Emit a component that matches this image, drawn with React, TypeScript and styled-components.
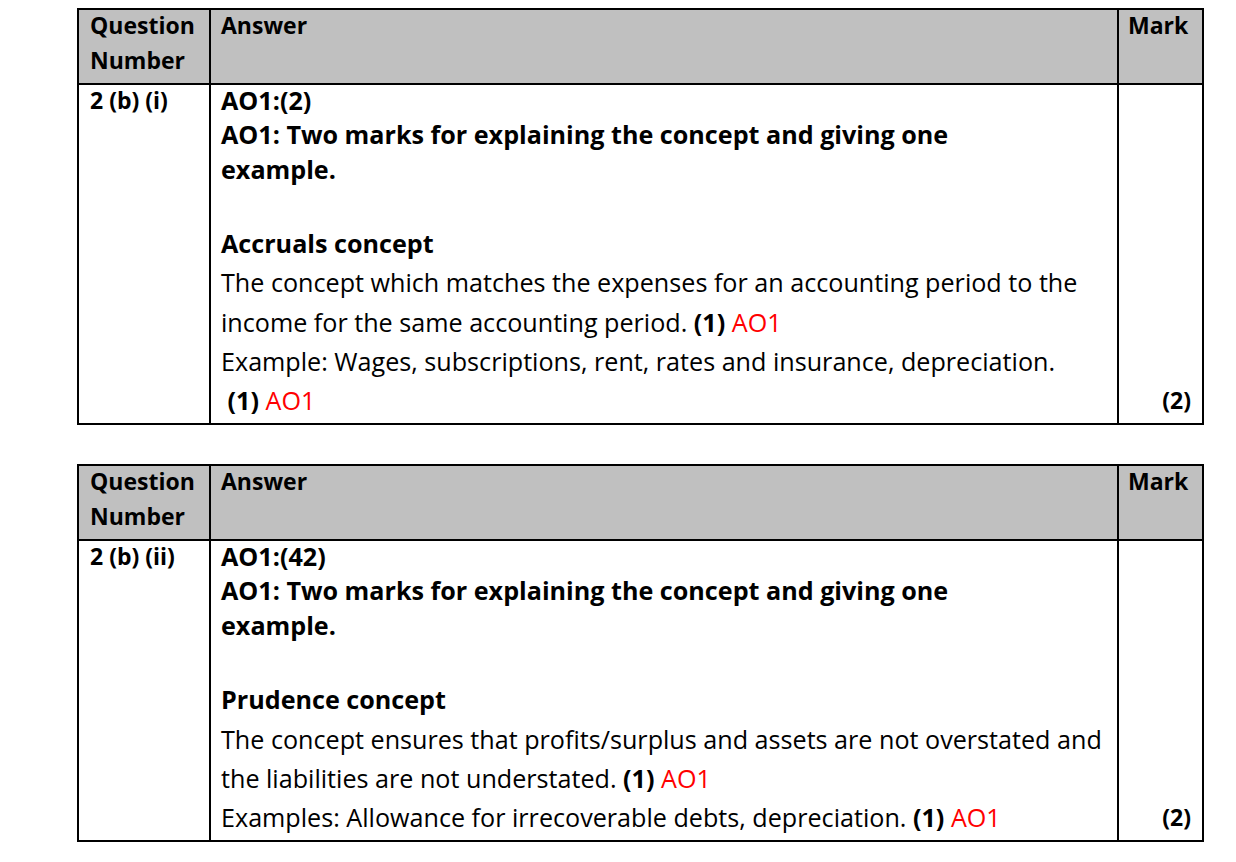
import React from "react";
import styled, { createGlobalStyle } from "styled-components";

const Global = createGlobalStyle`
  html, body { margin: 0; padding: 0; background: #ffffff; }
  body { font-family: "Open Sans", "Noto Sans", sans-serif; color: #000; }
`;

const Page = styled.div`
  display: flex;
  flex-direction: column;
  gap: 39px;
  padding: 8px 0 0 77px;
`;

const Table = styled.table`
  border-collapse: collapse;
  table-layout: fixed;
  width: 1125px;
  font-size: 23px;
`;

const HeadCell = styled.th<{ $pl?: number }>`
  background: #c0c0c0;
  border: 2px solid #000;
  text-align: left;
  vertical-align: top;
  font-weight: 700;
  line-height: 35px;
  padding: 0 8px 5px ${(p) => p.$pl ?? 11}px;
`;

const HeadText = styled.div`
  margin-top: -2px;
`;

const Cell = styled.td<{ $right?: boolean; $bottom?: boolean }>`
  border: 2px solid #000;
  vertical-align: ${(p) => (p.$bottom ? "bottom" : "top")};
  text-align: ${(p) => (p.$right ? "right" : "left")};
  padding: 0 11px 3px 11px;
`;

const AnswerCell = styled.td`
  border: 2px solid #000;
  vertical-align: top;
  text-align: left;
  padding: 0 6px 2.5px 10px;
  font-size: 25.15px;
  white-space: nowrap;
`;

const BoldBlock = styled.div`
  font-weight: 700;
  line-height: 34.6px;
  margin-top: -2.5px;
`;

const Spacer = styled.div`
  height: 37.5px;
`;

const Heading = styled.div`
  font-weight: 700;
  line-height: 39.4px;
`;

const Body = styled.div`
  line-height: 39.4px;
`;

const B = styled.b`
  font-weight: 700;
`;

const Red = styled.span`
  color: #ff0000;
`;

type Q = {
  num: string;
  ao: string;
  heading: string;
  body: React.ReactNode;
};

const questions: Q[] = [
  {
    num: "2 (b) (i)",
    ao: "AO1:(2)",
    heading: "Accruals concept",
    body: (
      <>
        The concept which matches the expenses for an accounting period to the
        <br />
        income for the same accounting period. <B>(1)</B> <Red>AO1</Red>
        <br />
        Example: Wages, subscriptions, rent, rates and insurance, depreciation.
        <br />
        &nbsp;<B>(1)</B> <Red>AO1</Red>
      </>
    ),
  },
  {
    num: "2 (b) (ii)",
    ao: "AO1:(42)",
    heading: "Prudence concept",
    body: (
      <>
        The concept ensures that profits/surplus and assets are not overstated
        and
        <br />
        the liabilities are not understated. <B>(1)</B> <Red>AO1</Red>
        <br />
        Examples: Allowance for irrecoverable debts, depreciation. <B>(1)</B>{" "}
        <Red>AO1</Red>
      </>
    ),
  },
];

function MarkTable({ q }: { q: Q }) {
  return (
    <Table>
      <colgroup>
        <col style={{ width: 132 }} />
        <col style={{ width: 908 }} />
        <col style={{ width: 85 }} />
      </colgroup>
      <thead>
        <tr>
          <HeadCell>
            <HeadText>
              Question
              <br />
              Number
            </HeadText>
          </HeadCell>
          <HeadCell $pl={10}>
            <HeadText>Answer</HeadText>
          </HeadCell>
          <HeadCell $pl={9}>
            <HeadText>Mark</HeadText>
          </HeadCell>
        </tr>
      </thead>
      <tbody>
        <tr>
          <Cell>
            <BoldBlock>{q.num}</BoldBlock>
          </Cell>
          <AnswerCell>
            <BoldBlock>
              {q.ao}
              <br />
              AO1: Two marks for explaining the concept and giving one
              <br />
              example.
            </BoldBlock>
            <Spacer />
            <Heading>{q.heading}</Heading>
            <Body>{q.body}</Body>
          </AnswerCell>
          <Cell $right $bottom>
            <Body>
              <B>(2)</B>
            </Body>
          </Cell>
        </tr>
      </tbody>
    </Table>
  );
}

export default function App() {
  return (
    <>
      <Global />
      <Page>
        {questions.map((q) => (
          <MarkTable key={q.num} q={q} />
        ))}
      </Page>
    </>
  );
}
